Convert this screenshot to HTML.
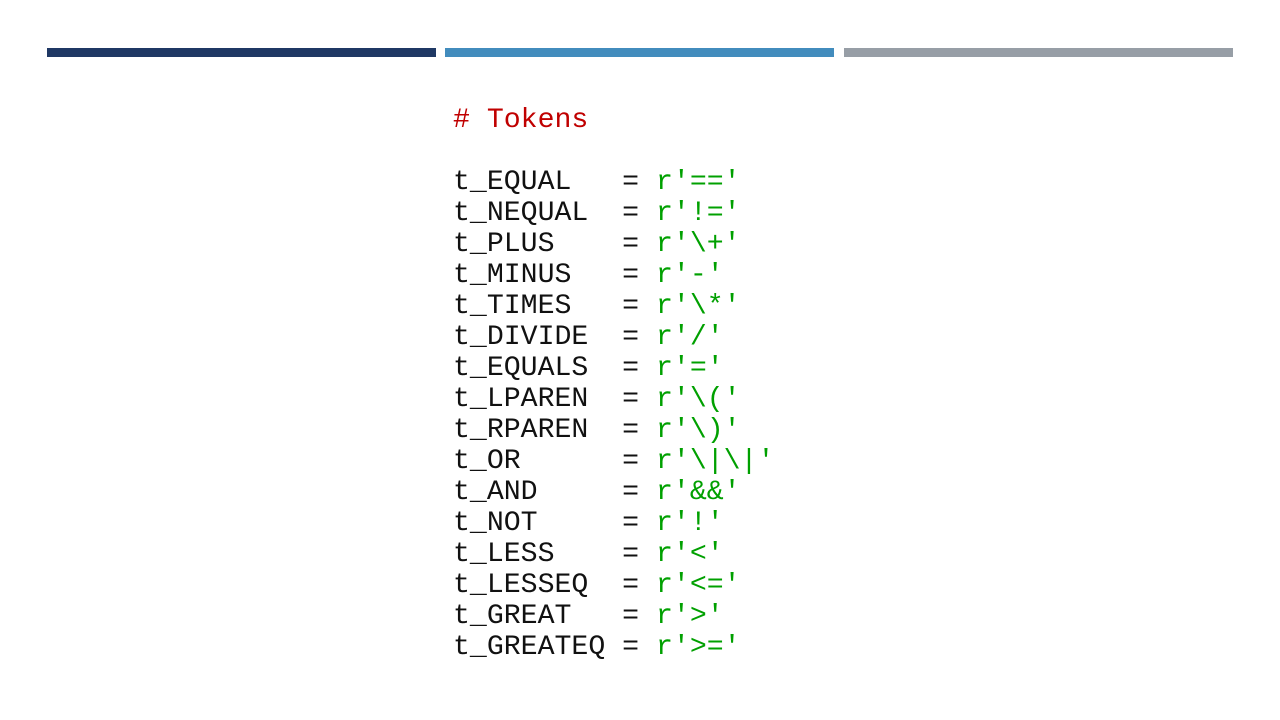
<!DOCTYPE html>
<html><head><style>
body{margin:0;width:1280px;height:720px;background:#fff;position:relative;overflow:hidden}
.b{position:absolute;top:48px;height:9px}
pre{position:absolute;left:453px;top:105px;margin:0;font-family:"Liberation Mono",monospace;font-size:28.2px;line-height:31px;color:#111}
.r{color:#c00000}.g{color:#00a000}
</style></head><body>
<div class="b" style="left:47px;width:389px;background:#1f3864"></div>
<div class="b" style="left:445px;width:389px;background:#428cbd"></div>
<div class="b" style="left:844px;width:389px;background:#979ea6"></div>
<pre><span class="r"># Tokens</span>

t_EQUAL   = <span class="g">r'=='</span>
t_NEQUAL  = <span class="g">r'!='</span>
t_PLUS    = <span class="g">r'\+'</span>
t_MINUS   = <span class="g">r'-'</span>
t_TIMES   = <span class="g">r'\*'</span>
t_DIVIDE  = <span class="g">r'/'</span>
t_EQUALS  = <span class="g">r'='</span>
t_LPAREN  = <span class="g">r'\('</span>
t_RPAREN  = <span class="g">r'\)'</span>
t_OR      = <span class="g">r'\|\|'</span>
t_AND     = <span class="g">r'&amp;&amp;'</span>
t_NOT     = <span class="g">r'!'</span>
t_LESS    = <span class="g">r'&lt;'</span>
t_LESSEQ  = <span class="g">r'&lt;='</span>
t_GREAT   = <span class="g">r'&gt;'</span>
t_GREATEQ = <span class="g">r'&gt;='</span></pre>
</body></html>
